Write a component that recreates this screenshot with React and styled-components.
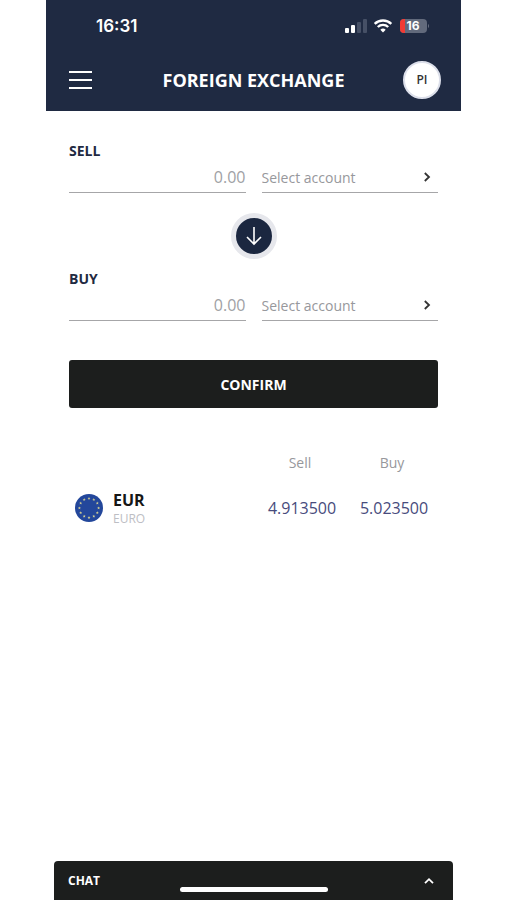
import React, { useState } from 'react'
import styled, { createGlobalStyle } from 'styled-components'

const STARS = Array.from({ length: 12 }, (_, i) => {
  const angle = (i * Math.PI) / 6
  return { x: 14 + 9.6 * Math.sin(angle), y: 14 - 9.6 * Math.cos(angle) }
})

const RATES = [{ code: 'EUR', name: 'EURO', sell: '4.913500', buy: '5.023500' }]

const StatusIcons = () => (
  <svg width="84" height="18" viewBox="0 0 84 18" aria-hidden="true">
    <rect x="0" y="11" width="4" height="5" rx="1" fill="#fff" />
    <rect x="6" y="8" width="4" height="8" rx="1" fill="#fff" />
    <rect x="12" y="5" width="4" height="11" rx="1" fill="#465066" />
    <rect x="18" y="2" width="4" height="14" rx="1" fill="#465066" />
    <g fill="none" stroke="#fff" strokeWidth="2.4">
      <path d="M29.7 6.8a12 12 0 0 1 16.6 0" />
      <path d="M32.8 10a7.4 7.4 0 0 1 10.4 0" />
    </g>
    <path d="M38 15.6l-2.7-2.8a3.9 3.9 0 0 1 5.4 0z" fill="#fff" />
    <rect x="55" y="2" width="27" height="14" rx="4" fill="#626a7c" />
    <path d="M60 2h-1a4 4 0 0 0-4 4v6a4 4 0 0 0 4 4h1z" fill="#f23b35" />
    <path d="M83 7a2.4 2.4 0 0 1 0 4z" fill="#626a7c" />
    <text x="68" y="13" textAnchor="middle" fill="#fff" fontFamily="Inter, sans-serif" fontWeight="700" fontSize="12">16</text>
  </svg>
)

const Chevron = ({ up }) => (
  <svg width="10" height="12" viewBox="0 0 10 12" fill="none" stroke="currentColor" strokeWidth="1.8" aria-hidden="true">
    {up ? <path d="M1 8.2L5 4.2L9 8.2" /> : <path d="M2.8 2L7 6L2.8 10" />}
  </svg>
)

const EuroFlag = () => (
  <svg width="28" height="28" viewBox="0 0 28 28" aria-hidden="true">
    <circle cx="14" cy="14" r="14" fill="#23479b" />
    {STARS.map((star, i) => (
      <path
        key={i}
        transform={`translate(${star.x} ${star.y})`}
        d="M0-1.6L.45-.5L1.5-.5L.65.2L1 1.3L0 .65L-1 1.3L-.65.2L-1.5-.5L-.45-.5Z"
        fill="#d3cf93"
      />
    ))}
  </svg>
)

const ExchangeSide = ({ id, title }) => {
  const [amount, setAmount] = useState('')

  return (
    <Side>
      <SideLabel htmlFor={`${id}-amount`}>{title}</SideLabel>
      <Fields>
        <Amount
          id={`${id}-amount`}
          inputMode="decimal"
          placeholder="0.00"
          value={amount}
          onChange={(e) => setAmount(e.target.value)}
        />
        <AccountField>
          <Account aria-label={`${title} account`} defaultValue="">
            <option value="">Select account</option>
          </Account>
          <Chevron />
        </AccountField>
      </Fields>
    </Side>
  )
}

const App = () => {
  const [chatOpen, setChatOpen] = useState(false)

  return (
    <Page>
      <GlobalStyle />
      <Header>
        <StatusBar>
          <Time>16:31</Time>
          <StatusIcons />
        </StatusBar>
        <NavBar>
          <MenuButton aria-label="Menu">
            <svg width="23" height="20" viewBox="0 0 23 20" aria-hidden="true">
              <path d="M0 2h23M0 10h23M0 18h23" stroke="#fff" strokeWidth="2" />
            </svg>
          </MenuButton>
          <Title>FOREIGN EXCHANGE</Title>
          <Avatar aria-label="Profile">PI</Avatar>
        </NavBar>
      </Header>

      <Main>
        <ExchangeSide id="sell" title="SELL" />
        <SwapButton aria-label="Swap currencies">
          <svg width="16" height="20" viewBox="0 0 16 20" fill="none" stroke="#fff" strokeWidth="1.6" aria-hidden="true">
            <path d="M8 1v17M1 11l7 7l7-7" />
          </svg>
        </SwapButton>
        <ExchangeSide id="buy" title="BUY" />
        <Confirm>CONFIRM</Confirm>

        <Rates>
          <thead>
            <tr>
              <HeadCell aria-label="Currency" />
              <HeadCell $width="96px">Sell</HeadCell>
              <HeadCell $width="88px">Buy</HeadCell>
            </tr>
          </thead>
          <tbody>
            {RATES.map((rate) => (
              <tr key={rate.code}>
                <td>
                  <Currency>
                    <EuroFlag />
                    <div>
                      <Code>{rate.code}</Code>
                      <Name>{rate.name}</Name>
                    </div>
                  </Currency>
                </td>
                <Rate>{rate.sell}</Rate>
                <Rate>{rate.buy}</Rate>
              </tr>
            ))}
          </tbody>
        </Rates>
      </Main>

      <Footer>
        <ChatBar aria-expanded={chatOpen} onClick={() => setChatOpen(!chatOpen)}>
          CHAT
          <Chevron up />
        </ChatBar>
        <HomeIndicator />
      </Footer>
    </Page>
  )
}

export default App

const GlobalStyle = createGlobalStyle`
  * {
    box-sizing: border-box;
  }
  body {
    margin: 0;
    background: #fff;
  }
  body, button, input, select {
    font-family: "Open Sans", "Noto Sans", sans-serif;
  }
  button {
    border: 0;
    padding: 0;
    cursor: pointer;
  }
`
const Page = styled.div`
  min-height: 100vh;
  padding: 0 46px;
  display: flex;
  flex-direction: column;
`
const Header = styled.header`
  background: #1f2a42;
  color: #fff;
  padding-bottom: 12px;
`
const StatusBar = styled.div`
  display: flex;
  align-items: center;
  justify-content: space-between;
  height: 52px;
  padding: 0 32px 0 50px;
`
const Time = styled.span`
  font-family: Inter, sans-serif;
  font-size: 17px;
  font-weight: 600;
`
const NavBar = styled.div`
  display: grid;
  grid-template-columns: 35px 1fr 38px;
  align-items: center;
  height: 47px;
  padding: 8px 20px 0 23px;
`
const MenuButton = styled.button`
  display: flex;
  background: none;
`
const Title = styled.h1`
  margin: 0;
  font-size: 18px;
  line-height: 22px;
  font-weight: 700;
  text-align: center;
`
const Avatar = styled.button`
  width: 38px;
  height: 38px;
  border: 2px solid #dcdfea;
  border-radius: 50%;
  background: #fff;
  color: #333;
  font-size: 12px;
  font-weight: 600;
`
const Main = styled.main`
  flex: 1;
  display: flex;
  flex-direction: column;
  padding: 29px 23px 0;
`
const Side = styled.section`
  display: flex;
  flex-direction: column;
`
const SideLabel = styled.label`
  color: #1f2a42;
  font-size: 14px;
  line-height: 22px;
  font-weight: 700;
`
const Fields = styled.div`
  display: grid;
  grid-template-columns: 1fr 1fr;
  gap: 16px;
`
const Amount = styled.input`
  width: 100%;
  height: 31px;
  padding: 0;
  border: 0;
  border-bottom: 1px solid #a6a6a8;
  background: none;
  color: #1f2a42;
  font-size: 16px;
  text-align: right;
  outline: 0;

  &::placeholder {
    color: #a0a1a5;
    opacity: 1;
  }
`
const AccountField = styled.div`
  display: flex;
  align-items: center;
  height: 31px;
  padding-right: 6px;
  border-bottom: 1px solid #a6a6a8;
  color: #333;
`
const Account = styled.select`
  flex: 1;
  min-width: 0;
  padding: 0;
  border: 0;
  background: none;
  color: #97989c;
  font-size: 14px;
  appearance: none;
  outline: 0;
`
const SwapButton = styled.button`
  display: flex;
  align-items: center;
  justify-content: center;
  align-self: center;
  width: 46px;
  height: 46px;
  margin: 20px 0 9px;
  border: 5px solid #e6e7ec;
  border-radius: 50%;
  background: #1b2740;
`
const Confirm = styled.button`
  height: 48px;
  margin-top: 39px;
  border-radius: 3px;
  background: #1c1e1d;
  color: #fff;
  font-size: 14px;
  font-weight: 700;
`
const Rates = styled.table`
  width: 100%;
  margin-top: 45px;
  border-collapse: collapse;
  table-layout: fixed;

  td {
    padding: 0;
  }
`
const HeadCell = styled.th`
  width: ${(props) => props.$width || 'auto'};
  height: 20px;
  padding: 0 4px 0 0;
  color: #97989c;
  font-size: 14px;
  line-height: 20px;
  font-weight: 400;
`
const Currency = styled.div`
  display: flex;
  align-items: center;
  gap: 10px;
  height: 70px;
  padding-left: 6px;
`
const Code = styled.div`
  color: #161616;
  font-size: 16px;
  line-height: 22px;
  font-weight: 700;
`
const Name = styled.div`
  color: #bdbec4;
  font-size: 12px;
  line-height: 16px;
`
const Rate = styled.td`
  color: #474b7c;
  font-size: 16px;
  text-align: center;
`
const Footer = styled.footer`
  position: relative;
  padding: 0 8px;
`
const ChatBar = styled.button`
  display: flex;
  align-items: center;
  justify-content: space-between;
  width: 100%;
  height: 39px;
  padding: 0 19px 0 14px;
  border-radius: 4px 4px 0 0;
  background: #1c1e1d;
  color: #fff;
  font-size: 12px;
  font-weight: 700;
`
const HomeIndicator = styled.div`
  position: absolute;
  bottom: 8px;
  left: 50%;
  width: 148px;
  height: 5px;
  border-radius: 3px;
  background: #fff;
  transform: translateX(-50%);
`
